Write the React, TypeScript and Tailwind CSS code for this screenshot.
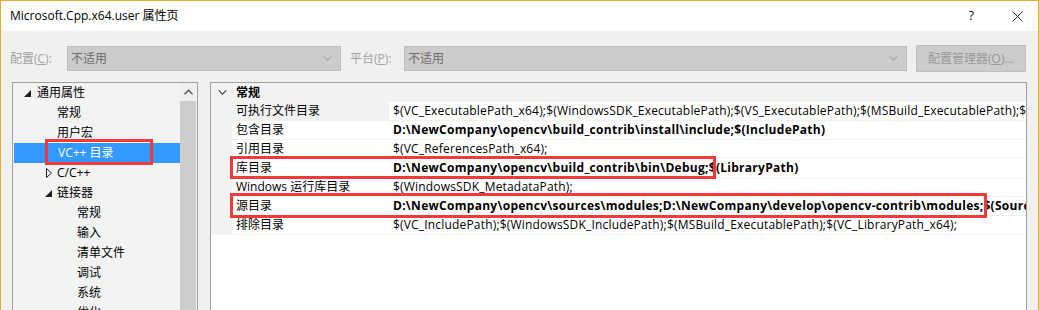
const FONT = '"Open Sans", "Noto Sans CJK SC", sans-serif';

interface TreeItem {
  label: string;
  indent: number;
  icon?: 'open' | 'closed';
  selected?: boolean;
}

const treeItems: TreeItem[] = [
  { label: '通用属性', indent: 0, icon: 'open' },
  { label: '常规', indent: 1 },
  { label: '用户宏', indent: 1 },
  { label: 'VC++ 目录', indent: 1, selected: true },
  { label: 'C/C++', indent: 1, icon: 'closed' },
  { label: '链接器', indent: 1, icon: 'open' },
  { label: '常规', indent: 2 },
  { label: '输入', indent: 2 },
  { label: '清单文件', indent: 2 },
  { label: '调试', indent: 2 },
  { label: '系统', indent: 2 },
  { label: '优化', indent: 2 },
];

const props: Array<{ name: string; value: string; bold?: boolean; selected?: boolean }> = [
  {
    name: '可执行文件目录',
    value:
      '$(VC_ExecutablePath_x64);$(WindowsSDK_ExecutablePath);$(VS_ExecutablePath);$(MSBuild_ExecutablePath);$(FxCopDir);$(PATH);',
    selected: true,
  },
  { name: '包含目录', value: 'D:\\NewCompany\\opencv\\build_contrib\\install\\include;$(IncludePath)', bold: true },
  { name: '引用目录', value: '$(VC_ReferencesPath_x64);' },
  { name: '库目录', value: 'D:\\NewCompany\\opencv\\build_contrib\\bin\\Debug;$(LibraryPath)', bold: true },
  { name: 'Windows 运行库目录', value: '$(WindowsSDK_MetadataPath);' },
  {
    name: '源目录',
    value: 'D:\\NewCompany\\opencv\\sources\\modules;D:\\NewCompany\\develop\\opencv-contrib\\modules;$(SourcePath)',
    bold: true,
  },
  {
    name: '排除目录',
    value: '$(VC_IncludePath);$(WindowsSDK_IncludePath);$(MSBuild_ExecutablePath);$(VC_LibraryPath_x64);',
  },
];

function OpenTriangle() {
  return (
    <svg width="7" height="7" viewBox="0 0 7 7">
      <polygon points="7,0 7,7 0,7" fill="#1e1e1e" />
    </svg>
  );
}

function ClosedTriangle() {
  return (
    <svg width="6" height="10" viewBox="0 0 6 10">
      <polygon points="0.5,0.5 5.5,5 0.5,9.5" fill="none" stroke="#1e1e1e" strokeWidth="1" />
    </svg>
  );
}

function Chevron({ color = '#555', w = 10, h = 6 }: { color?: string; w?: number; h?: number }) {
  return (
    <svg width={w} height={h} viewBox="0 0 10 6">
      <polyline points="0.5,0.5 5,5 9.5,0.5" fill="none" stroke={color} strokeWidth="1.3" />
    </svg>
  );
}

function Combo({ width }: { width: string }) {
  return (
    <div
      className={`flex h-[25px] items-center justify-between border border-[#bfbfbf] bg-[#cccccc] pl-[3px] pr-[8px] ${width}`}
    >
      <span className="text-[12px] text-[#6d6d6d]">不适用</span>
      <Chevron color="#a8a8a8" w={9} h={5} />
    </div>
  );
}

export default function App() {
  return (
    <div
      className="relative h-[310px] w-[1039px] overflow-hidden border-x border-t border-[#e6a93c] bg-[#f0f0f0] text-[12px] text-black"
      style={{ fontFamily: FONT }}
    >
      {/* title bar */}
      <div className="flex h-[30px] items-center justify-between bg-white pl-[9px] pr-[15px]">
        <span className="text-[12px] text-black">Microsoft.Cpp.x64.user 属性页</span>
        <div className="flex items-center gap-[38px]">
          <span className="text-[12px] text-black">?</span>
          <svg width="11" height="11" viewBox="0 0 11 11">
            <path d="M0.5 0.5 L10.5 10.5 M10.5 0.5 L0.5 10.5" stroke="#222" strokeWidth="1" />
          </svg>
        </div>
      </div>

      {/* toolbar */}
      <div className="flex items-center pl-[9px] pt-[14px]">
        <span className="w-[57px] text-[#a3a3a3]">
          配置(<span className="underline">C</span>):
        </span>
        <Combo width="w-[274px]" />
        <span className="ml-[9px] w-[54px] text-[#a3a3a3]">
          平台(<span className="underline">P</span>):
        </span>
        <Combo width="w-[503px]" />
        <div className="ml-[9px] flex h-[27px] w-[110px] items-center justify-center border border-[#bfbfbf] bg-[#cccccc] text-[#9a9a9a]">
          配置管理器(<span className="underline">O</span>)...
        </div>
      </div>

      {/* panels */}
      <div className="mt-[10px] flex pl-[11px]">
        {/* tree */}
        <div className="flex h-[240px] w-[186px] border border-[#a0a0a0] bg-[#f3f3f3]">
          <div className="w-[167px]">
            {treeItems.map((item, i) => (
              <div
                key={i}
                className={`flex h-[20px] items-center ${item.selected ? 'ml-[1px] bg-[#3399ff] text-white' : ''}`}
              >
                <div
                  className={`flex items-center justify-center ${
                    item.indent === 0 ? 'w-[21px] pl-[7px]' : item.indent === 1 ? 'w-[43px] pl-[28px]' : 'w-[63px]'
                  } ${item.selected ? 'w-[42px]' : ''}`}
                >
                  {item.icon === 'open' && <OpenTriangle />}
                  {item.icon === 'closed' && <ClosedTriangle />}
                </div>
                <span className={item.indent === 0 ? 'pl-[3px]' : 'pl-[1px]'}>{item.label}</span>
              </div>
            ))}
          </div>
          <div className="flex w-[16px] flex-col bg-[#f0f0f0]">
            <div className="flex h-[18px] items-center justify-center">
              <svg width="9" height="6" viewBox="0 0 10 6">
                <polyline points="0.5,5.5 5,1 9.5,5.5" fill="none" stroke="#555" strokeWidth="1.5" />
              </svg>
            </div>
            <div className="flex-1 bg-[#cdcdcd]" />
          </div>
        </div>

        {/* property grid */}
        <div className="ml-[12px] h-[240px] w-[817px] border border-[#a0a0a0] bg-white">
          <div className="flex h-[19px] items-center bg-[#f2f2f2]">
            <div className="flex w-[21px] items-center justify-center pl-[1px]">
              <Chevron color="#444" w={9} h={5} />
            </div>
            <span className="pl-[4px] font-bold">常规</span>
          </div>
          {props.map((p) => (
            <div key={p.name} className="flex h-[19px] bg-[#f2f2f2]">
              <div className="w-[21px]" />
              <div
                className={`w-[157px] border-b border-[#f0f0f0] pl-[4px] leading-[18px] ${
                  p.selected ? 'bg-[#f2f2f2]' : 'bg-white'
                }`}
              >
                {p.name}
              </div>
              <div
                className={`flex-1 overflow-hidden whitespace-nowrap border-b border-[#f0f0f0] bg-white pl-[4px] leading-[18px] ${
                  p.bold ? 'font-bold tracking-[0.28px]' : 'tracking-[0.18px]'
                }`}
              >
                {p.value}
              </div>
            </div>
          ))}
        </div>
      </div>

      {/* annotation boxes */}
      <div className="pointer-events-none absolute left-[44px] top-[138px] h-[26px] w-[108px] border-[3px] border-[#f23a3a]" />
      <div className="pointer-events-none absolute left-[229px] top-[155px] h-[23px] w-[486px] border-[3px] border-[#f23a3a]" />
      <div className="pointer-events-none absolute left-[229px] top-[192px] h-[25px] w-[757px] border-[3px] border-[#f23a3a]" />
    </div>
  );
}
